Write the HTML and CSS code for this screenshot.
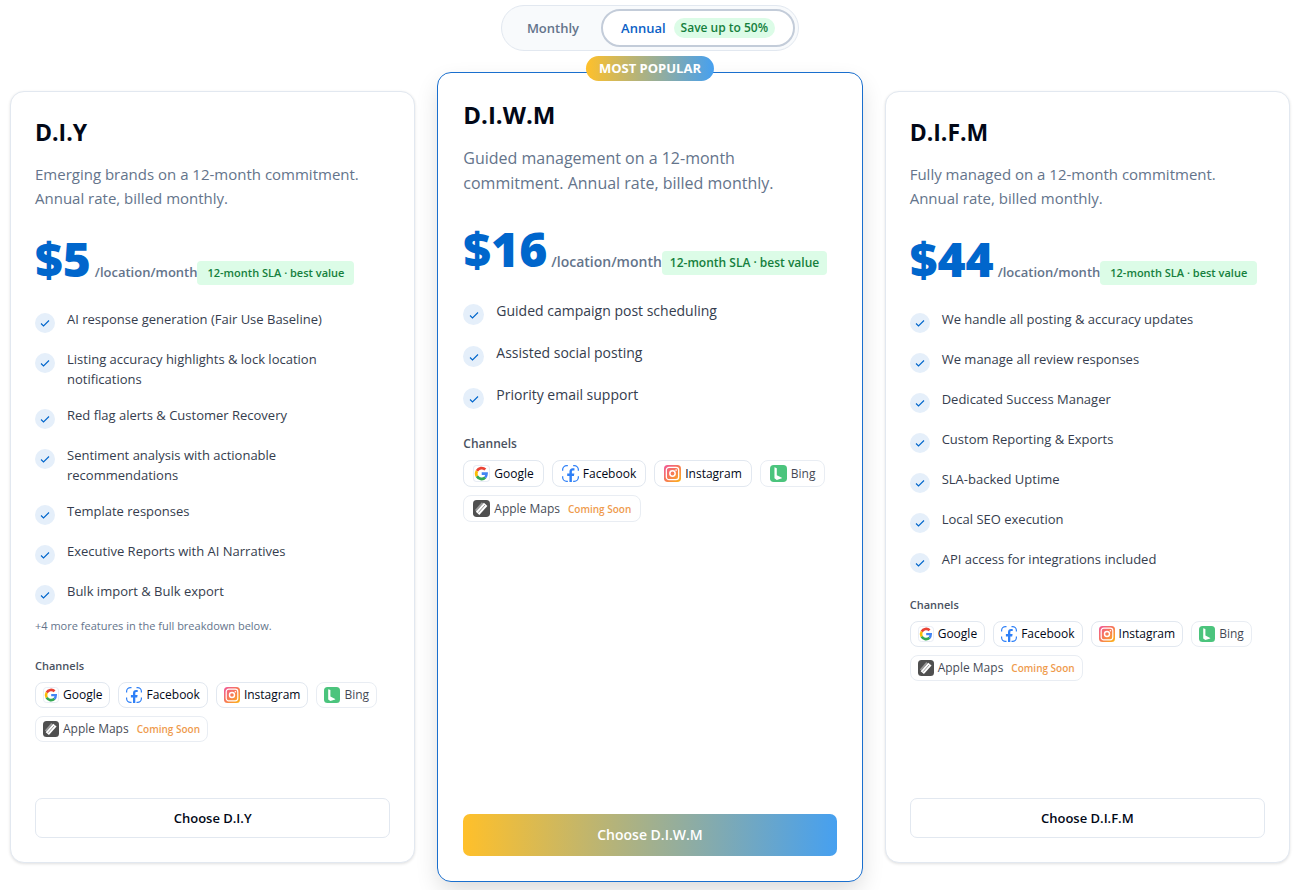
FILE: index.html
```html
<!doctype html>
<html lang="en">
<head>
<meta charset="utf-8">
<meta name="viewport" content="width=device-width, initial-scale=1.0">
<link rel="stylesheet" href="styles.css">
<title>Pricing</title>
</head>
<body>

<!-- shared icons -->
<svg class="sprite" width="0" height="0" aria-hidden="true">
	<defs>
		<linearGradient id="ig" x1="0" y1="0" x2="1" y2="1">
			<stop offset="0" stop-color="#f0569a"/>
			<stop offset=".5" stop-color="#f77a55"/>
			<stop offset="1" stop-color="#fdb713"/>
		</linearGradient>
	</defs>
	<symbol id="check" viewBox="0 0 24 24">
		<path d="M4 13l5 5L20 7" fill="none" stroke="#0066cc" stroke-width="2.2"/>
	</symbol>
	<symbol id="google" viewBox="0 0 16 16">
		<rect x=".5" y=".5" width="15" height="15" rx="3" fill="#fff" stroke="#e9edf5"/>
		<path d="M11.6 4.3A5 5 0 0 0 3.7 5.6" fill="none" stroke="#ea4335" stroke-width="2.6"/>
		<path d="M3.7 5.6a5 5 0 0 0 0 5" fill="none" stroke="#fbbc05" stroke-width="2.6"/>
		<path d="M3.7 10.6a5 5 0 0 0 7.8 1.2" fill="none" stroke="#34a853" stroke-width="2.6"/>
		<path d="M8.2 8.1h4.6c0 1.6-.4 2.800-1.300 3.700" fill="none" stroke="#4285f4" stroke-width="2.4"/>
	</symbol>
	<symbol id="facebook" viewBox="0 0 16 16">
		<rect width="16" height="16" rx="3.5" fill="#fff"/>
		<path d="M5.500.6H4.500A3.900 3.900 0 0 0 .6 4.500v1M10.500.6h1a3.900 3.900 0 0 1 3.900 3.900v1M.6 10.500v1a3.900 3.900 0 0 0 3.900 3.900h1M15.400 10.500v1a3.900 3.900 0 0 1-3.900 3.900h-1" fill="none" stroke="#2f80f7" stroke-width="1.2"/>
		<path d="M7 16v-5.600H4.900V8H7V6.300c0-2.200 1.200-3.300 3.100-3.300.7 0 1.300.1 1.600.1v2h-1.100c-1 0-1.300.5-1.300 1.200V8h2.300l-.4 2.400H9.300V16z" fill="#2f80f7"/>
	</symbol>
	<symbol id="instagram" viewBox="0 0 16 16">
		<rect width="16" height="16" rx="3.5" fill="url(#ig)"/>
		<rect x="2.2" y="2.2" width="11.6" height="11.6" rx="2.5" fill="none" stroke="#fff" stroke-width="1.2"/>
		<circle cx="8" cy="8" r="2.500" fill="none" stroke="#fff" stroke-width="1.4"/>
		<circle cx="11.4" cy="4.700" r=".8" fill="#fff"/>
	</symbol>
	<symbol id="bing" viewBox="0 0 16 16">
		<rect width="16" height="16" rx="3.5" fill="#10b152"/>
		<path d="M4.200 2.200l2.200.8v6.600l4.800 2.400v.5l-4.800 1.500-2.200-1.500z" fill="#fff"/>
	</symbol>
	<symbol id="apple" viewBox="0 0 16 16">
		<rect width="16" height="16" rx="3.5" fill="#151515"/>
		<path d="M2.500 10L9 2.600" stroke="#777" stroke-width="1.8"/>
		<path d="M4.300 12.600l7.600-8.500" stroke="#fff" stroke-width="4.400"/>
		<path d="M5 11.800l6.200-7" stroke="#555" stroke-width=".8"/>
	</symbol>
</svg>

<main class="pricing">
	<div class="toggle">
		<button type="button" class="toggle-btn">Monthly</button>
		<button type="button" class="toggle-btn active">Annual <span class="save">Save up to 50%</span></button>
	</div>

	<div class="plans">

		<section class="card">
			<h2>D.I.Y</h2>
			<p class="desc">Emerging brands on a 12-month commitment. Annual rate, billed monthly.</p>
			<div class="price">
				<span class="amount">$5</span>
				<span class="per">/location/month</span>
				<span class="sla">12-month SLA · best value</span>
			</div>
			<ul class="features">
				<li><span class="tick"><svg><use href="#check"/></svg></span>AI response generation (Fair Use Baseline)</li>
				<li><span class="tick"><svg><use href="#check"/></svg></span>Listing accuracy highlights &amp; lock location notifications</li>
				<li><span class="tick"><svg><use href="#check"/></svg></span>Red flag alerts &amp; Customer Recovery</li>
				<li><span class="tick"><svg><use href="#check"/></svg></span>Sentiment analysis with actionable recommendations</li>
				<li><span class="tick"><svg><use href="#check"/></svg></span>Template responses</li>
				<li><span class="tick"><svg><use href="#check"/></svg></span>Executive Reports with AI Narratives</li>
				<li><span class="tick"><svg><use href="#check"/></svg></span>Bulk import &amp; Bulk export</li>
			</ul>
			<p class="more">+4 more features in the full breakdown below.</p>
			<h3>Channels</h3>
			<ul class="channels">
				<li><svg><use href="#google"/></svg>Google</li>
				<li><svg><use href="#facebook"/></svg>Facebook</li>
				<li><svg><use href="#instagram"/></svg>Instagram</li>
				<li class="soon"><svg><use href="#bing"/></svg>Bing</li>
				<li class="soon"><svg><use href="#apple"/></svg>Apple Maps <em>Coming Soon</em></li>
			</ul>
			<button type="button" class="choose">Choose D.I.Y</button>
		</section>

		<section class="card popular">
			<span class="ribbon">MOST POPULAR</span>
			<h2>D.I.W.M</h2>
			<p class="desc">Guided management on a 12-month commitment. Annual rate, billed monthly.</p>
			<div class="price">
				<span class="amount">$16</span>
				<span class="per">/location/month</span>
				<span class="sla">12-month SLA · best value</span>
			</div>
			<ul class="features">
				<li><span class="tick"><svg><use href="#check"/></svg></span>Guided campaign post scheduling</li>
				<li><span class="tick"><svg><use href="#check"/></svg></span>Assisted social posting</li>
				<li><span class="tick"><svg><use href="#check"/></svg></span>Priority email support</li>
			</ul>
			<h3>Channels</h3>
			<ul class="channels">
				<li><svg><use href="#google"/></svg>Google</li>
				<li><svg><use href="#facebook"/></svg>Facebook</li>
				<li><svg><use href="#instagram"/></svg>Instagram</li>
				<li class="soon"><svg><use href="#bing"/></svg>Bing</li>
				<li class="soon"><svg><use href="#apple"/></svg>Apple Maps <em>Coming Soon</em></li>
			</ul>
			<button type="button" class="choose">Choose D.I.W.M</button>
		</section>

		<section class="card">
			<h2>D.I.F.M</h2>
			<p class="desc">Fully managed on a 12-month commitment. Annual rate, billed monthly.</p>
			<div class="price">
				<span class="amount">$44</span>
				<span class="per">/location/month</span>
				<span class="sla">12-month SLA · best value</span>
			</div>
			<ul class="features">
				<li><span class="tick"><svg><use href="#check"/></svg></span>We handle all posting &amp; accuracy updates</li>
				<li><span class="tick"><svg><use href="#check"/></svg></span>We manage all review responses</li>
				<li><span class="tick"><svg><use href="#check"/></svg></span>Dedicated Success Manager</li>
				<li><span class="tick"><svg><use href="#check"/></svg></span>Custom Reporting &amp; Exports</li>
				<li><span class="tick"><svg><use href="#check"/></svg></span>SLA-backed Uptime</li>
				<li><span class="tick"><svg><use href="#check"/></svg></span>Local SEO execution</li>
				<li><span class="tick"><svg><use href="#check"/></svg></span>API access for integrations included</li>
			</ul>
			<h3>Channels</h3>
			<ul class="channels">
				<li><svg><use href="#google"/></svg>Google</li>
				<li><svg><use href="#facebook"/></svg>Facebook</li>
				<li><svg><use href="#instagram"/></svg>Instagram</li>
				<li class="soon"><svg><use href="#bing"/></svg>Bing</li>
				<li class="soon"><svg><use href="#apple"/></svg>Apple Maps <em>Coming Soon</em></li>
			</ul>
			<button type="button" class="choose">Choose D.I.F.M</button>
		</section>

	</div>
</main>
</body>
</html>
```
FILE: styles.css
```css
* {
	box-sizing: border-box;
}
body {
	margin: 0;
	background: #fff;
	color: #020817;
	font-family: "Segoe UI", "Open Sans", "Noto Sans", sans-serif;
	font-size: 13px;
	line-height: 20px;
}
h2, h3, p, ul {
	margin: 0;
	padding: 0;
}
ul {
	list-style: none;
}
button {
	font: inherit;
	color: inherit;
	cursor: pointer;
}
.sprite {
	position: absolute;
}
.pricing {
	padding: 5px 14px 8px 10px;
}

/* billing toggle */
.toggle {
	display: flex;
	width: fit-content;
	margin: 0 auto 21px;
	padding: 3px;
	border: 1px solid #e2e8f0;
	border-radius: 23px;
	background: #f8fafc;
}
.toggle-btn {
	display: flex;
	align-items: center;
	gap: 8px;
	height: 38px;
	padding: 0 20px;
	border: 2px solid transparent;
	border-radius: 19px;
	background: none;
	color: #64748b;
	font-weight: 600;
}
.toggle-btn.active {
	padding: 0 18px;
	border-color: #c3ccd9;
	background: #fff;
	color: #0b5fc6;
}
.save {
	padding: 2px 7px;
	border-radius: 10px;
	background: #dcfce7;
	color: #15803d;
	font-size: 12px;
	line-height: 16px;
}

/* plans */
.plans {
	display: grid;
	grid-template-columns: minmax(0, 405fr) minmax(0, 425fr) minmax(0, 405fr);
	gap: 22px;
}
.card {
	display: flex;
	flex-direction: column;
	margin: 19px 0;
	padding: 24px;
	border: 1px solid #e2e8f0;
	border-radius: 14px;
	background: #fff;
	box-shadow: 0 1px 3px rgba(0, 0, 0, .12);
}
.card h2 {
	font-size: 23px;
	line-height: 32px;
	font-weight: 700;
}
.desc {
	margin-top: 14px;
	color: #64748b;
	font-size: 15px;
	line-height: 24px;
}
.price {
	display: flex;
	align-items: baseline;
	margin-top: 25px;
	white-space: nowrap;
}
.amount {
	margin-right: 4px;
	color: #0066cc;
	font-size: 48px;
	line-height: 48px;
	font-weight: 800;
}
.per {
	color: #64748b;
	font-weight: 600;
}
.sla {
	padding: 4px 10px;
	border-radius: 4px;
	background: #dcfce7;
	color: #15803d;
	font-size: 11px;
	line-height: 16px;
	font-weight: 600;
}
.features {
	display: flex;
	flex-direction: column;
	gap: 16px;
	margin-top: 24px;
	color: #353d4e;
}
.features li {
	display: flex;
	gap: 12px;
}
.tick {
	display: flex;
	flex: none;
	align-items: center;
	justify-content: center;
	width: 20px;
	height: 20px;
	margin-top: 4px;
	border-radius: 50%;
	background: #e5effa;
}
.tick svg {
	width: 12px;
	height: 12px;
}
.more {
	margin-top: 13px;
	color: #64748b;
	font-size: 11px;
	line-height: 16px;
}
.card h3 {
	margin: 24px 0 8px;
	color: #4a5261;
	font-size: 11px;
	line-height: 16px;
	font-weight: 600;
}
.channels {
	display: flex;
	flex-wrap: wrap;
	gap: 8px;
	margin-bottom: 56px;
	font-size: 12px;
	line-height: 16px;
}
.channels li {
	display: flex;
	align-items: center;
	gap: 4px;
	padding: 4px 7px;
	border: 1px solid #e2e8f0;
	border-radius: 8px;
}
.channels svg {
	width: 16px;
	height: 16px;
}
.channels .soon {
	opacity: .75;
}
.channels em {
	margin-left: 4px;
	color: #ea7a0c;
	font-size: 10px;
	font-style: normal;
	font-weight: 600;
}
.choose {
	height: 40px;
	margin-top: auto;
	border: 1px solid #e2e8f0;
	border-radius: 7px;
	background: #fff;
	font-weight: 600;
}

/* highlighted plan, one step larger */
.popular {
	position: relative;
	margin: 0;
	padding: 25px;
	border-color: #1a6fce;
	box-shadow: 0 10px 24px -3px rgba(0, 0, 0, .16);
}
.popular h2 {
	font-size: 24px;
	line-height: 34px;
}
.popular .desc {
	font-size: 16px;
	line-height: 25px;
}
.popular .price {
	margin-top: 28px;
}
.popular .amount {
	line-height: 50px;
}
.popular .per {
	font-size: 14px;
}
.popular .sla {
	padding: 4px 8px;
	font-size: 12px;
}
.popular .features {
	gap: 17px;
	margin-top: 25px;
	font-size: 14px;
	line-height: 21px;
}
.popular .tick {
	width: 21px;
	height: 21px;
}
.popular h3 {
	margin-top: 27px;
	font-size: 12px;
}
.popular .channels svg {
	width: 17px;
	height: 17px;
}
.popular .channels li {
	padding: 4px 9px;
}
.popular .choose {
	height: 42px;
	border: 0;
	background: linear-gradient(90deg, #ffc02a, #46a0f0);
	color: #fff;
	font-size: 14px;
}
.ribbon {
	position: absolute;
	top: -17px;
	left: 50%;
	padding: 4px 13px;
	border-radius: 13px;
	background: linear-gradient(90deg, #ffc02a, #46a0f0);
	color: #fff;
	font-size: 13px;
	line-height: 17px;
	font-weight: 700;
	white-space: nowrap;
	transform: translateX(-50%);
}
```
